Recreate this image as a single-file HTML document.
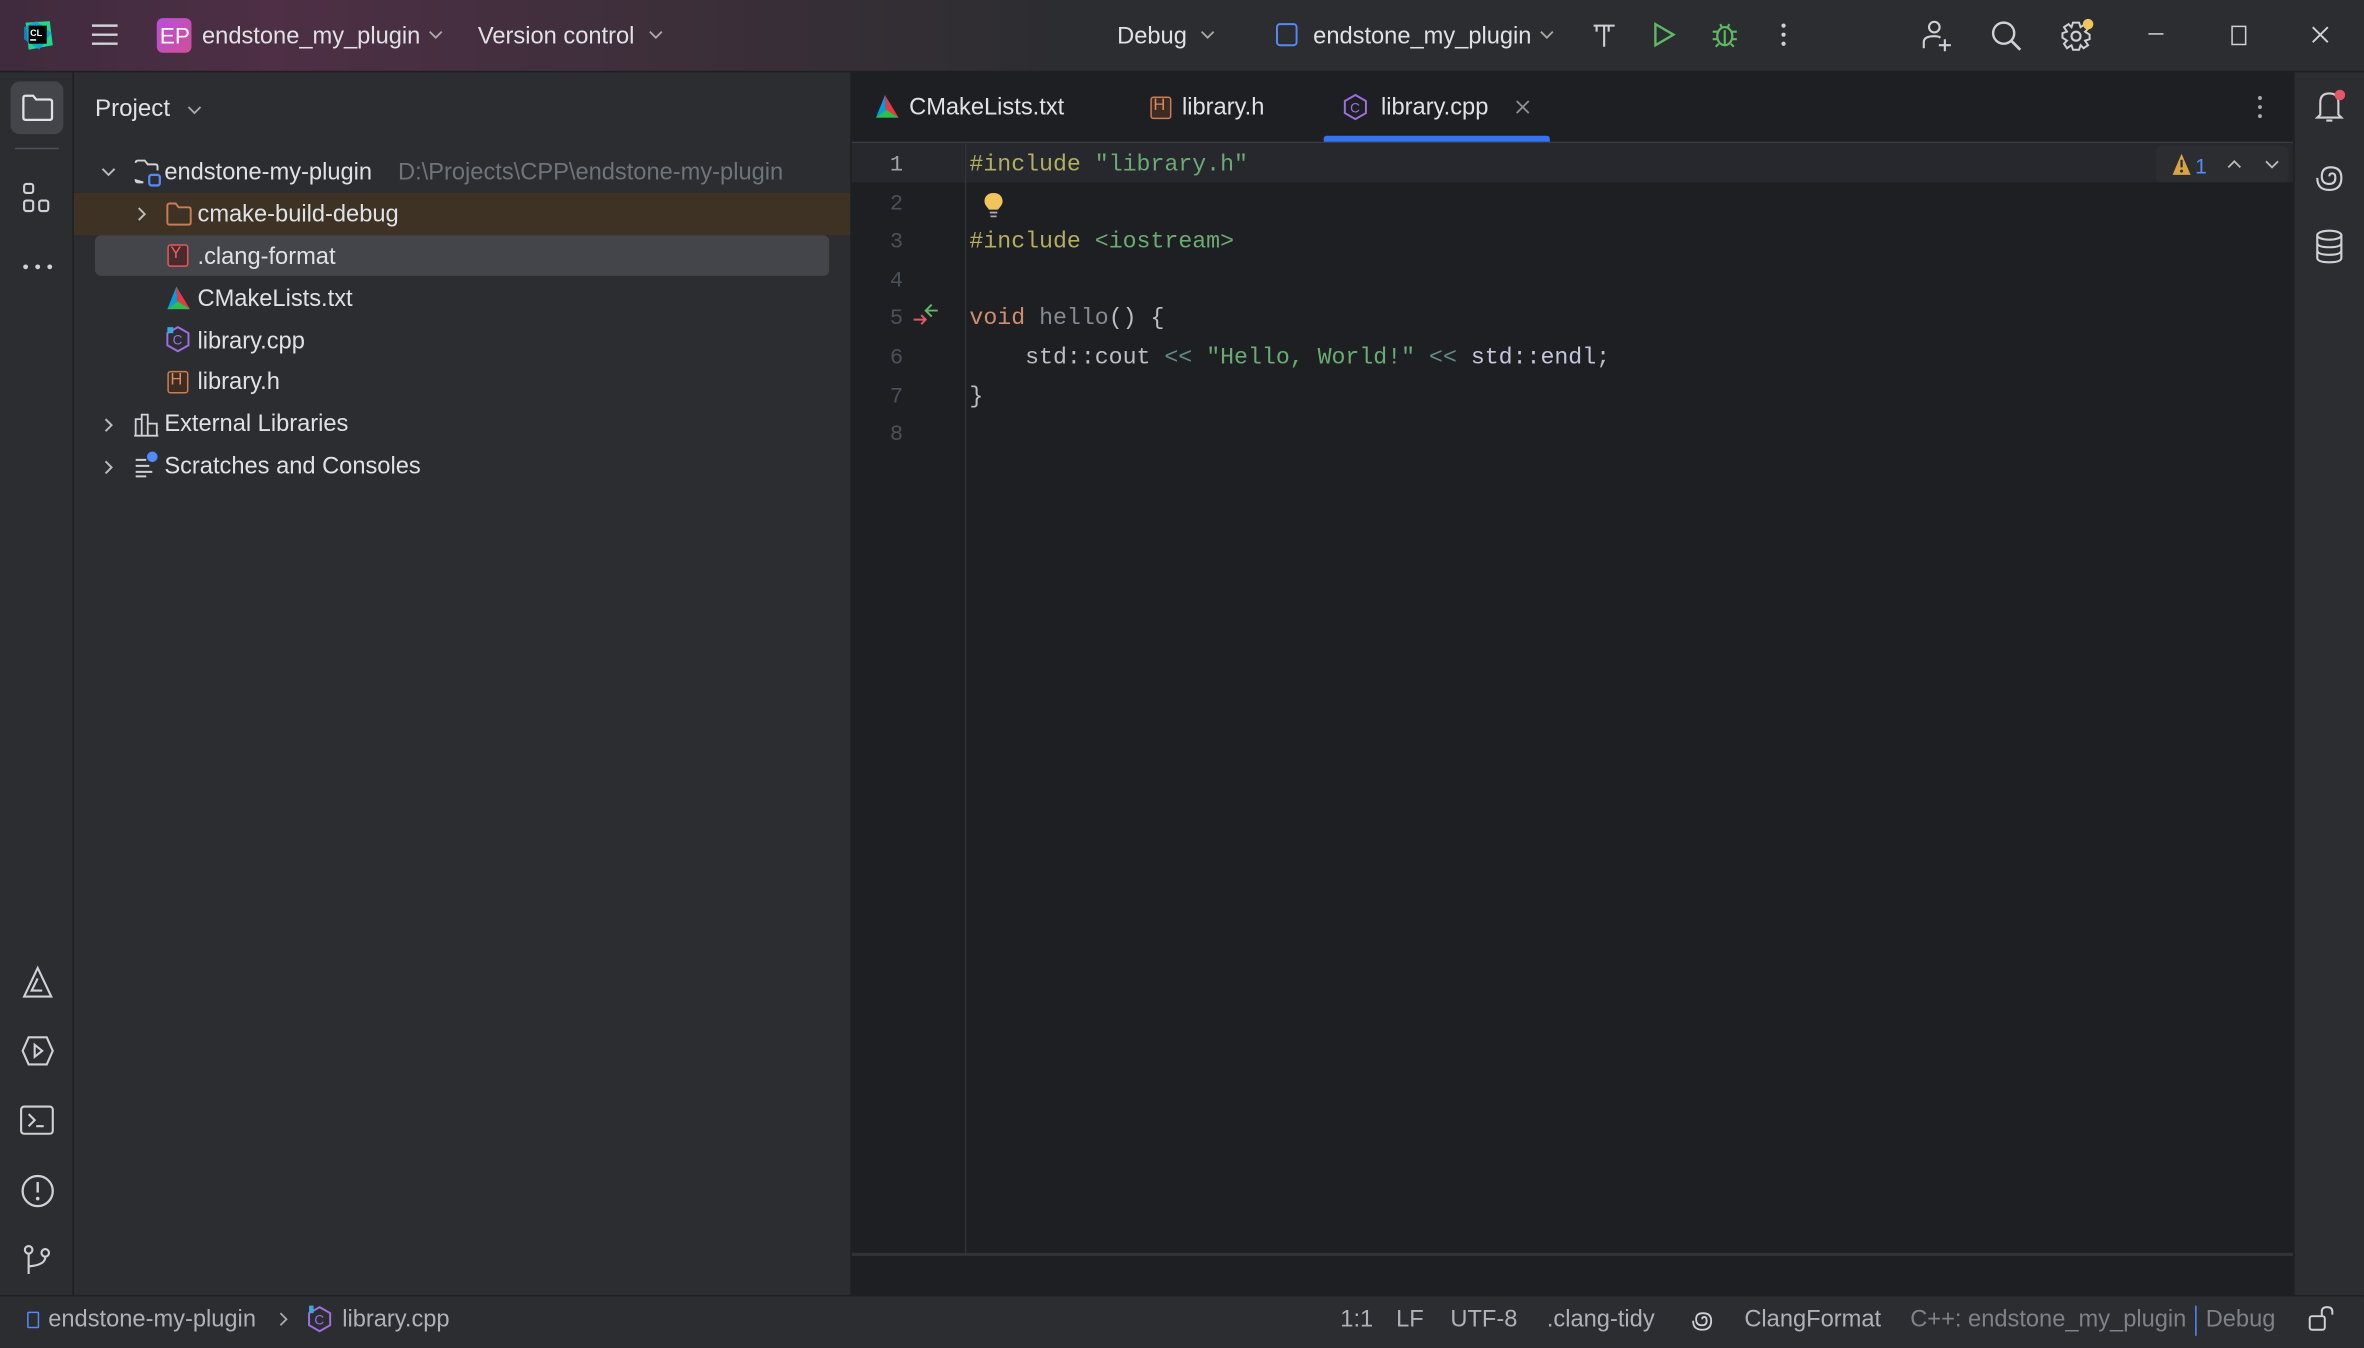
<!DOCTYPE html>
<html><head><meta charset="utf-8">
<style>
html,body{margin:0;padding:0;background:#2b2d30;width:2364px;height:1348px;overflow:hidden}
#w{position:absolute;left:0;top:0;width:1568px;height:894px;transform:scale(1.50765);transform-origin:0 0;font-family:"Liberation Sans",sans-serif;color:#dfe1e5;font-size:15.7px;background:#2b2d30}
.a{position:absolute}
.t{position:absolute;white-space:nowrap;margin-top:1px}
.mono{font-family:"Liberation Mono",monospace;font-size:15.4px}
svg{position:absolute;overflow:visible}
</style></head><body><div id="w">
<div class="a" style="left:0;top:0;width:1568px;height:47px;background:linear-gradient(90deg,#3f2b3d 0px,#4e2f45 180px,#3e2f3b 420px,#2b2d30 720px)"></div>
<div class="a" style="left:0;top:47px;width:1568px;height:1px;background:#1e1f22"></div>
<svg style="left:14px;top:12px" width="22" height="22" viewBox="0 0 22 22"><path d="M3 3L19 2L21 18L5 21Z" fill="#21d789"/><path d="M2 6L10 2L20 10L12 21L2 14Z" fill="#0a9ad9" opacity=".8"/><rect x="5" y="5" width="12" height="12" fill="#000"/><text x="6" y="12" font-size="6" fill="#fff" font-family="Liberation Sans" font-weight="bold">CL</text><rect x="6" y="14" width="4" height="1" fill="#fff"/></svg>
<svg style="left:60px;top:15px" width="19" height="16"><path d="M1 2H18M1 8H18M1 14H18" stroke="#cfd1d6" stroke-width="1.6"/></svg>
<div class="a" style="left:104px;top:12px;width:23px;height:23px;border-radius:4px;background:linear-gradient(135deg,#b84fd9,#d14f9a)"></div>
<div class="t" style="left:106px;top:15px;font-size:15px;color:#fff">EP</div>
<div class="t" style="left:134px;top:15px">endstone_my_plugin</div>
<svg style="left:284px;top:20px" width="10" height="6"><path d="M1 1L5 5L9 1" stroke="#aaa" fill="none" stroke-width="1.2"/></svg>
<div class="t" style="left:317px;top:15px">Version control</div>
<svg style="left:430px;top:20px" width="10" height="6"><path d="M1 1L5 5L9 1" stroke="#aaa" fill="none" stroke-width="1.2"/></svg>
<div class="t" style="left:741px;top:15px">Debug</div>
<svg style="left:796px;top:20px" width="10" height="6"><path d="M1 1L5 5L9 1" stroke="#aaa" fill="none" stroke-width="1.2"/></svg>
<svg style="left:846px;top:15px" width="16" height="16"><rect x="1" y="1" width="13" height="14" rx="2" stroke="#548af7" fill="none" stroke-width="1.3"/></svg>
<div class="t" style="left:871px;top:15px">endstone_my_plugin</div>
<svg style="left:1021px;top:20px" width="10" height="6"><path d="M1 1L5 5L9 1" stroke="#aaa" fill="none" stroke-width="1.2"/></svg>
<svg style="left:1055px;top:14px" width="18" height="18"><path d="M2 3H16M4 3V7M9 3V17M12 3V7" stroke="#cfd1d6" fill="none" stroke-width="1.4"/></svg>
<svg style="left:1096px;top:14px" width="16" height="18"><path d="M2 2L14 9L2 16Z" stroke="#5fb865" fill="none" stroke-width="1.6"/></svg>
<svg style="left:1134px;top:13px" width="20" height="20"><ellipse cx="10" cy="11" rx="5" ry="6" stroke="#5fb865" fill="none" stroke-width="1.5"/><path d="M2 8H6M14 8H18M2 13H5M15 13H18M4 18L6 16M16 18L14 16M7 3L8 5M13 3L12 5M10 7V17" stroke="#5fb865" stroke-width="1.4"/></svg>
<svg style="left:1180px;top:14px" width="6" height="18"><circle cx="3" cy="3" r="1.4" fill="#cfd1d6"/><circle cx="3" cy="9" r="1.4" fill="#cfd1d6"/><circle cx="3" cy="15" r="1.4" fill="#cfd1d6"/></svg>
<svg style="left:1274px;top:12px" width="22" height="22"><circle cx="9" cy="6" r="3.5" stroke="#cfd1d6" fill="none" stroke-width="1.4"/><path d="M2 20V16Q2 12 9 12Q12 12 13 13M16 14V22M12 18H20" stroke="#cfd1d6" fill="none" stroke-width="1.4"/></svg>
<svg style="left:1320px;top:13px" width="22" height="22"><circle cx="9" cy="9" r="7" stroke="#cfd1d6" fill="none" stroke-width="1.6"/><path d="M14 14L20 20" stroke="#cfd1d6" stroke-width="1.8"/></svg>
<svg style="left:1366px;top:12px" width="24" height="24"><circle cx="11" cy="12" r="3" stroke="#cfd1d6" fill="none" stroke-width="1.4"/><path d="M9 3H13L14 6L17 4L19 7L17 9L20 11V14L17 15L19 18L16 20L14 18L13 21H9L8 18L5 20L3 17L5 15L2 13V10L5 9L3 6L6 4L8 6Z" stroke="#cfd1d6" fill="none" stroke-width="1.3"/><circle cx="19" cy="4" r="3.5" fill="#f2c55c"/></svg>
<div class="a" style="left:1425px;top:22px;width:10px;height:1.3px;background:#cfd1d6"></div>
<div class="a" style="left:1480px;top:17px;width:8px;height:11px;border:1.3px solid #cfd1d6"></div>
<svg style="left:1533px;top:17px" width="12" height="12"><path d="M1 1L11 11M11 1L1 11" stroke="#cfd1d6" stroke-width="1.3"/></svg>

<div class="a" style="left:0;top:48px;width:48px;height:811px;background:#2b2d30;border-right:1px solid #1e1f22"></div>
<div class="a" style="left:7px;top:54px;width:35px;height:35px;border-radius:6px;background:#43454a"></div>
<svg style="left:14px;top:62px" width="22" height="20"><path d="M1.5 3Q1.5 1.5 3 1.5H8L10 4H19Q20.5 4 20.5 5.5V16Q20.5 17.5 19 17.5H3Q1.5 17.5 1.5 16Z" stroke="#dfe1e5" fill="none" stroke-width="1.5"/></svg>
<div class="a" style="left:10px;top:98px;width:29px;height:1px;background:#4e5157"></div>
<svg style="left:15px;top:121px" width="20" height="22"><rect x="1" y="1" width="6" height="6" rx="1.5" stroke="#cfd1d6" fill="none" stroke-width="1.4"/><rect x="1" y="12" width="6" height="7" rx="1.5" stroke="#cfd1d6" fill="none" stroke-width="1.4"/><rect x="11" y="12" width="6" height="7" rx="1.5" stroke="#cfd1d6" fill="none" stroke-width="1.4"/></svg>
<svg style="left:14px;top:174px" width="22" height="6"><circle cx="3" cy="3" r="1.6" fill="#cfd1d6"/><circle cx="11" cy="3" r="1.6" fill="#cfd1d6"/><circle cx="19" cy="3" r="1.6" fill="#cfd1d6"/></svg>
<svg style="left:14px;top:641px" width="22" height="22"><path d="M11 1L20 20H2Z M11 8L7 16H14" stroke="#cfd1d6" fill="none" stroke-width="1.4"/></svg>
<svg style="left:13px;top:686px" width="24" height="22"><path d="M6 2H18L22 11L18 20H6L2 11Z M10 7L15 11L10 15Z" stroke="#cfd1d6" fill="none" stroke-width="1.4"/></svg>
<svg style="left:13px;top:733px" width="24" height="20"><rect x="1" y="1" width="21" height="18" rx="2" stroke="#cfd1d6" fill="none" stroke-width="1.4"/><path d="M6 6L10 10L6 14M11 14H16" stroke="#cfd1d6" fill="none" stroke-width="1.4"/></svg>
<svg style="left:13px;top:778px" width="24" height="24"><circle cx="12" cy="12" r="10" stroke="#cfd1d6" fill="none" stroke-width="1.5"/><path d="M12 6V13" stroke="#cfd1d6" stroke-width="1.6"/><circle cx="12" cy="17" r="1.2" fill="#cfd1d6"/></svg>
<svg style="left:15px;top:825px" width="20" height="22"><circle cx="4" cy="4" r="2.5" stroke="#cfd1d6" fill="none" stroke-width="1.4"/><circle cx="15" cy="6" r="2.5" stroke="#cfd1d6" fill="none" stroke-width="1.4"/><path d="M4 7V20M15 9Q15 14 4 15" stroke="#cfd1d6" fill="none" stroke-width="1.4"/></svg>

<div class="t" style="left:63px;top:63px;font-size:16px">Project</div>
<svg style="left:124px;top:70px" width="10" height="6"><path d="M1 1L5 5L9 1" stroke="#aaa" fill="none" stroke-width="1.2"/></svg>
<div class="a" style="left:49px;top:128px;width:515px;height:28px;background:#3d3223"></div>
<div class="a" style="left:63px;top:156px;width:487px;height:27px;border-radius:4px;background:#43454a"></div>
<svg style="left:67px;top:111px" width="10" height="6"><path d="M1 1L5 5L9 1" stroke="#bbb" fill="none" stroke-width="1.3"/></svg>
<svg style="left:89px;top:105px" width="20" height="20"><path d="M1 3Q1 1.5 2.5 1.5H7L9 4H14Q15.5 4 15.5 5.5V8M6 16H2.5Q1 16 1 14.5Z" stroke="#cfd1d6" fill="none" stroke-width="1.3"/><rect x="10" y="11" width="7" height="7" rx="1.5" stroke="#548af7" fill="none" stroke-width="1.5"/></svg>
<div class="t" style="left:109px;top:105px">endstone-my-plugin</div>
<div class="t" style="left:264px;top:105px;color:#6f737a">D:\Projects\CPP\endstone-my-plugin</div>
<svg style="left:91px;top:137px" width="6" height="10"><path d="M1 1L5 5L1 9" stroke="#bbb" fill="none" stroke-width="1.3"/></svg>
<svg style="left:110px;top:134px" width="18" height="16"><path d="M1 2.5Q1 1 2.5 1H6.5L8.5 3.5H15Q16.5 3.5 16.5 5V13.5Q16.5 15 15 15H2.5Q1 15 1 13.5Z" stroke="#c77d55" fill="none" stroke-width="1.3"/></svg>
<div class="t" style="left:131px;top:133px">cmake-build-debug</div>
<div class="a" style="left:111px;top:162px;width:12px;height:13px;border:1.2px solid #db5c5c;border-radius:2px;background:#4a2a2c"></div>
<div class="t" style="left:113px;top:161px;font-size:11px;color:#e06666">Y</div>
<div class="t" style="left:131px;top:161px">.clang-format</div>
<svg style="left:110px;top:189px" width="18" height="17"><path d="M7 1L1 16H8Z" fill="#0a9ad9"/><path d="M7 1L16 16H8Z" fill="#e33b45"/><path d="M1 16L8 11L16 16Z" fill="#2bbf4e"/></svg>
<div class="t" style="left:131px;top:189px">CMakeLists.txt</div>
<svg style="left:110px;top:216px" width="18" height="18"><path d="M8 1L15 5V13L8 17L1 13V5Z" stroke="#9f6fe0" fill="none" stroke-width="1.3"/><text x="4.5" y="12.5" font-size="9" fill="#9f6fe0" font-family="Liberation Sans">C</text><rect x="1" y="1" width="4" height="4" fill="#3fa6e0"/></svg>
<div class="t" style="left:131px;top:217px">library.cpp</div>
<div class="a" style="left:111px;top:246px;width:12px;height:13px;border:1.2px solid #c77d55;border-radius:2px;background:#3d2c22"></div>
<div class="t" style="left:113px;top:245px;font-size:11px;color:#d88a60">H</div>
<div class="t" style="left:131px;top:244px">library.h</div>
<svg style="left:69px;top:277px" width="6" height="10"><path d="M1 1L5 5L1 9" stroke="#bbb" fill="none" stroke-width="1.3"/></svg>
<svg style="left:89px;top:273px" width="18" height="17"><path d="M1 16V5H5V16M5 16V2H9V16M9 16V8H15V16M0 16H16" stroke="#cfd1d6" fill="none" stroke-width="1.2"/></svg>
<div class="t" style="left:109px;top:272px">External Libraries</div>
<svg style="left:69px;top:305px" width="6" height="10"><path d="M1 1L5 5L1 9" stroke="#bbb" fill="none" stroke-width="1.3"/></svg>
<svg style="left:89px;top:299px" width="18" height="18"><path d="M1 6H8M1 10H10M1 14H12M1 17H8" stroke="#cfd1d6" stroke-width="1.3"/><circle cx="12" cy="4" r="3.5" fill="#548af7"/></svg>
<div class="t" style="left:109px;top:300px">Scratches and Consoles</div>

<div class="a" style="left:564px;top:48px;width:1px;height:811px;background:#1e1f22"></div>
<div class="a" style="left:565px;top:48px;width:956px;height:811px;background:#1e1f22"></div>
<div class="a" style="left:565px;top:94px;width:956px;height:1px;background:#393b40"></div>
<svg style="left:580px;top:62px" width="18" height="17"><path d="M7 1L1 16H8Z" fill="#0a9ad9"/><path d="M7 1L16 16H8Z" fill="#e33b45"/><path d="M1 16L8 11L16 16Z" fill="#2bbf4e"/></svg>
<div class="t" style="left:603px;top:62px">CMakeLists.txt</div>
<div class="a" style="left:763px;top:64px;width:12px;height:13px;border:1.2px solid #c77d55;border-radius:2px;background:#3d2c22"></div>
<div class="t" style="left:765px;top:63px;font-size:11px;color:#d88a60">H</div>
<div class="t" style="left:784px;top:62px">library.h</div>
<svg style="left:891px;top:62px" width="18" height="18"><path d="M8 1L15 5V13L8 17L1 13V5Z" stroke="#9f6fe0" fill="none" stroke-width="1.3"/><text x="4.5" y="12.5" font-size="9" fill="#9f6fe0" font-family="Liberation Sans">C</text></svg>
<div class="t" style="left:916px;top:62px">library.cpp</div>
<svg style="left:1005px;top:66px" width="10" height="10"><path d="M1 1L9 9M9 1L1 9" stroke="#8c8f94" stroke-width="1.2"/></svg>
<div class="a" style="left:878px;top:90px;width:150px;height:4px;border-radius:2px 2px 0 0;background:#3574f0"></div>
<svg style="left:1496px;top:63px" width="6" height="16"><circle cx="3" cy="2" r="1.3" fill="#aaa"/><circle cx="3" cy="8" r="1.3" fill="#aaa"/><circle cx="3" cy="14" r="1.3" fill="#aaa"/></svg>

<div class="a" style="left:565px;top:95px;width:956px;height:26px;background:#26282e"></div>
<div class="a" style="left:640px;top:95px;width:1px;height:736px;background:#313338"></div>
<div class="a" style="left:565px;top:831px;width:956px;height:2px;background:#313338"></div>
<div class="a" style="left:1430px;top:97px;width:88px;height:24px;background:#2b2d30;border-radius:3px"></div>
<svg style="left:1440px;top:101px" width="16" height="16"><path d="M7 1L13 15H1Z" fill="#d9a343"/><path d="M7 5V10" stroke="#2b2d30" stroke-width="1.5"/><circle cx="7" cy="12.5" r="1" fill="#2b2d30"/></svg>
<div class="t" style="left:1456px;top:101px;color:#548af7;font-size:14px">1</div>
<svg style="left:1477px;top:106px" width="10" height="6"><path d="M1 5L5 1L9 5" stroke="#bbb" fill="none" stroke-width="1.2"/></svg>
<svg style="left:1502px;top:106px" width="10" height="6"><path d="M1 1L5 5L9 1" stroke="#bbb" fill="none" stroke-width="1.2"/></svg>

<div class="mono" style="position:absolute;left:565px;top:98px;width:34px;text-align:right;color:#4b5059;line-height:25.6px;font-size:14.6px">
<div style="color:#a1a3ab">1</div><div>2</div><div>3</div><div>4</div><div>5</div><div>6</div><div>7</div><div>8</div></div>
<svg style="left:604px;top:200px" width="20" height="18"><path d="M14 2L10 6L14 10M10 6H18" stroke="#5fb865" fill="none" stroke-width="1.3"/><path d="M2 12H10M7 9L10 12L7 15" stroke="#e55765" fill="none" stroke-width="1.3"/></svg>
<svg style="left:652px;top:127px" width="14" height="18"><path d="M7 1C3 1 1 3.5 1 6.5C1 9 3 10.5 4 12H10C11 10.5 13 9 13 6.5C13 3.5 11 1 7 1Z" fill="#f2c55c"/><path d="M4.5 14H9.5M5 16.5H9" stroke="#aaa" stroke-width="1.2"/></svg>
<div class="mono" style="position:absolute;left:643px;top:97px;line-height:25.6px;white-space:pre;color:#bcbec4"><div><span style="color:#b3ae60">#include</span> <span style="color:#6aab73">"library.h"</span></div><div> </div><div><span style="color:#b3ae60">#include</span> <span style="color:#6aab73">&lt;iostream&gt;</span></div><div> </div><div><span style="color:#cf8e6d">void</span> <span style="color:#868a91">hello</span>() {</div><div>    std::cout <span style="color:#5f8c8a">&lt;&lt;</span> <span style="color:#6aab73">"Hello, World!"</span> <span style="color:#5f8c8a">&lt;&lt;</span> <span style="color:#c4c6dd">std::endl</span>;</div><div>}</div><div> </div></div>

<div class="a" style="left:1521px;top:48px;width:47px;height:811px;background:#2b2d30;border-left:1px solid #1e1f22"></div>
<svg style="left:1535px;top:58px" width="22" height="26"><path d="M4 18V10Q4 4 10 4Q16 4 16 10V18L18 20H2Z M8 22H12" stroke="#cfd1d6" fill="none" stroke-width="1.4"/><circle cx="17" cy="5" r="3.5" fill="#e55765"/></svg>
<svg style="left:1535px;top:106px" width="20" height="22"><path d="M10 11Q10 9 12 9Q14 9 14 12Q14 16 10 16Q5 16 5 11Q5 5 11 5Q18 5 18 12Q18 20 10 20Q2 20 2 12" stroke="#cfd1d6" fill="none" stroke-width="1.4"/></svg>
<svg style="left:1535px;top:152px" width="20" height="24"><ellipse cx="10" cy="4" rx="8" ry="3" stroke="#cfd1d6" fill="none" stroke-width="1.4"/><path d="M2 4V19Q2 22 10 22Q18 22 18 19V4M2 9Q2 12 10 12Q18 12 18 9M2 14Q2 17 10 17Q18 17 18 14" stroke="#cfd1d6" fill="none" stroke-width="1.4"/></svg>

<div class="a" style="left:0;top:859px;width:1568px;height:1px;background:#1e1f22"></div>
<div class="a" style="left:0;top:860px;width:1568px;height:34px;background:#2b2d30"></div>
<div class="a" style="left:18px;top:870px;width:6px;height:9px;border:1.3px solid #548af7;border-radius:1px"></div>
<div class="t" style="left:32px;top:866px;color:#aeb1b7">endstone-my-plugin</div>
<svg style="left:185px;top:870px" width="6" height="10"><path d="M1 1L5 5L1 9" stroke="#aaa" fill="none" stroke-width="1.2"/></svg>
<svg style="left:204px;top:866px" width="18" height="18"><path d="M8 1L15 5V13L8 17L1 13V5Z" stroke="#9f6fe0" fill="none" stroke-width="1.3"/><text x="4.5" y="12.5" font-size="9" fill="#9f6fe0" font-family="Liberation Sans">C</text><rect x="1" y="0" width="3" height="5" fill="#3fa6e0"/></svg>
<div class="t" style="left:227px;top:866px;color:#aeb1b7">library.cpp</div>
<div class="t" style="left:889px;top:866px;color:#aeb1b7">1:1</div>
<div class="t" style="left:926px;top:866px;color:#aeb1b7">LF</div>
<div class="t" style="left:962px;top:866px;color:#aeb1b7">UTF-8</div>
<div class="t" style="left:1026px;top:866px;color:#aeb1b7">.clang-tidy</div>
<svg style="left:1121px;top:867px" width="16" height="17"><path d="M8 8Q8 6.5 9.5 6.5Q11 6.5 11 9Q11 12 8 12Q4 12 4 8Q4 4 8.5 4Q14 4 14 9Q14 15 8 15Q2 15 2 9" stroke="#cfd1d6" fill="none" stroke-width="1.2"/></svg>
<div class="t" style="left:1157px;top:866px;color:#aeb1b7">ClangFormat</div>
<div class="t" style="left:1267px;top:866px;color:#7e8187">C++: endstone_my_plugin</div>
<div class="a" style="left:1456px;top:866px;width:1px;height:20px;background:#548af7"></div>
<div class="t" style="left:1463px;top:866px;color:#7e8187">Debug</div>
<svg style="left:1531px;top:866px" width="18" height="18"><rect x="1" y="7" width="10" height="9" rx="1.5" stroke="#cfd1d6" fill="none" stroke-width="1.3"/><path d="M9 7V4Q9 1 12.5 1Q16 1 16 4V6" stroke="#cfd1d6" fill="none" stroke-width="1.3"/></svg>
</div></body></html>
